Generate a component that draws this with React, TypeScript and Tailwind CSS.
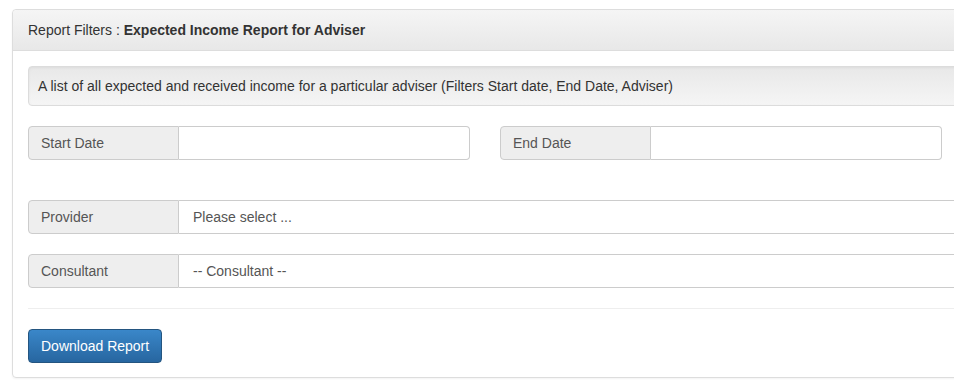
import React from "react";

function Group({ label, value, className }: { label: string; value?: string; className: string }) {
  return (
    <div className={`flex h-[34px] ${className}`}>
      <div className="w-[151px] shrink-0 flex items-center pl-[12px] bg-[#eeeeee] border border-[#cccccc] rounded-l-[4px] text-[14px] text-[#555555]">
        {label}
      </div>
      <div className="flex-1 flex items-center pl-[14px] bg-white border border-l-0 border-[#cccccc] rounded-r-[4px] text-[14px] text-[#555555]">
        {value}
      </div>
    </div>
  );
}

export default function App() {
  return (
    <div className="w-[954px] h-[392px] overflow-hidden bg-white" style={{ fontFamily: '"Liberation Sans", Arial, sans-serif' }}>
      <div className="ml-[12px] mt-[9px] w-[1000px] border border-[#dddddd] rounded-[4px] shadow-[0_1px_2px_rgba(0,0,0,0.05)]">
        <div className="h-[41px] flex items-center pl-[15px] bg-gradient-to-b from-[#f5f5f5] to-[#e8e8e8] border-b border-[#dddddd] rounded-t-[4px] text-[14px] text-[#333333]">
          <span>Report Filters :&nbsp;</span>
          <span className="font-bold">Expected Income Report for Adviser</span>
        </div>
        <div className="px-[15px] pt-[15px] pb-[14px]">
          <div className="h-[40px] flex items-center pl-[9px] bg-gradient-to-b from-[#e8e8e8] to-[#f5f5f5] border border-[#dcdcdc] rounded-[4px] shadow-[inset_0_1px_3px_rgba(0,0,0,0.05),0_1px_0_rgba(255,255,255,0.1)] text-[14px] text-[#333333]">
            A list of all expected and received income for a particular adviser (Filters Start date, End Date, Adviser)
          </div>
          <div className="flex gap-[30px] mt-[20px]">
            <Group label="Start Date" className="w-[442px]" />
            <Group label="End Date" className="w-[442px]" />
          </div>
          <Group label="Provider" value="Please select ..." className="mt-[40px] w-full" />
          <Group label="Consultant" value="-- Consultant --" className="mt-[20px] w-full" />
          <div className="mt-[20px] border-t border-[#eeeeee]" />
          <button className="mt-[20px] h-[34px] px-[12px] flex items-center text-[14px] text-white rounded-[4px] border border-[#245580] bg-gradient-to-b from-[#3a87c9] to-[#2766a0]">
            Download Report
          </button>
        </div>
      </div>
    </div>
  );
}
